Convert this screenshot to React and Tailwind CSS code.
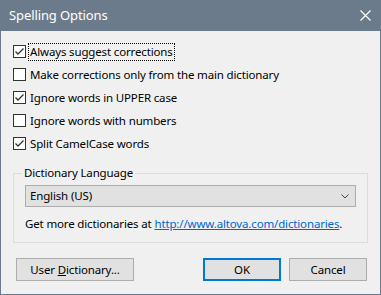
import React from "react";

const font = { fontFamily: '"Noto Sans", "Open Sans", sans-serif' };

function Check({ checked }) {
  return (
    <span className="w-[13px] h-[13px] border border-[#333333] bg-white flex items-center justify-center shrink-0">
      {checked && (
        <svg width="11" height="11" viewBox="0 0 11 11">
          <path d="M1.5 5.5 L4 8 L9.5 2.5" fill="none" stroke="#333333" strokeWidth="1.3" />
        </svg>
      )}
    </span>
  );
}

function Row({ checked, label, focus }) {
  return (
    <div className="h-[23px] flex items-center pl-[12px]">
      <Check checked={checked} />
      <span
        className={
          "ml-[3px] px-[1px] leading-[16px] whitespace-nowrap " +
          (focus ? "outline outline-1 outline-dotted outline-black" : "")
        }
      >
        {label}
      </span>
    </div>
  );
}

export default function App() {
  return (
    <div
      className="w-[381px] h-[295px] flex flex-col text-[11.5px] tracking-[-0.15px] text-black bg-[#f0f0f0]"
      style={font}
    >
      <div className="h-[31px] bg-[#6c7b8b] flex items-center justify-between pl-[9px] pr-[10px] shrink-0">
        <span className="text-white text-[13px] tracking-[-0.1px]">Spelling Options</span>
        <svg width="11" height="11" viewBox="0 0 11 11">
          <path d="M0.5 0.5 L10.5 10.5 M10.5 0.5 L0.5 10.5" stroke="white" strokeWidth="1.2" />
        </svg>
      </div>
      <div className="flex-1 border-x border-b border-[#6c7b8b] flex flex-col pt-[9px]">
        <Row checked label="Always suggest corrections" focus />
        <Row label="Make corrections only from the main dictionary" />
        <Row checked label="Ignore words in UPPER case" />
        <Row label="Ignore words with numbers" />
        <Row checked label="Split CamelCase words" />
        <fieldset className="mx-[12px] mt-[10px] border border-[#dcdcdc] px-[11px] pb-[10px]">
          <legend className="ml-[-3px] px-[2px] leading-[16px]">Dictionary Language</legend>
          <div className="mt-[4px] h-[22px] border border-[#adadad] bg-[#e1e1e1] flex items-center justify-between pl-[4px] pr-[6px]">
            <span>English (US)</span>
            <svg width="8" height="5" viewBox="0 0 8 5">
              <path d="M0.5 0.5 L4 4 L7.5 0.5" fill="none" stroke="#444" strokeWidth="1" />
            </svg>
          </div>
          <div className="mt-[9px] leading-[16px] whitespace-nowrap">
            Get more dictionaries at{" "}
            <span className="text-[#0066cc] underline">http://www.altova.com/dictionaries</span>.
          </div>
        </fieldset>
        <div className="flex mt-[15px] pl-[15px] pr-[13px]">
          <div className="w-[118px] h-[23px] border border-[#adadad] bg-[#e1e1e1] flex items-center justify-center">
            <span>
              User <span className="underline">D</span>ictionary...
            </span>
          </div>
          <div className="flex-1" />
          <div className="w-[78px] h-[23px] border-2 border-[#0078d7] bg-[#e1e1e1] flex items-center justify-center">
            OK
          </div>
          <div className="w-[78px] h-[23px] ml-[8px] border border-[#adadad] bg-[#e1e1e1] flex items-center justify-center">
            Cancel
          </div>
        </div>
      </div>
    </div>
  );
}
